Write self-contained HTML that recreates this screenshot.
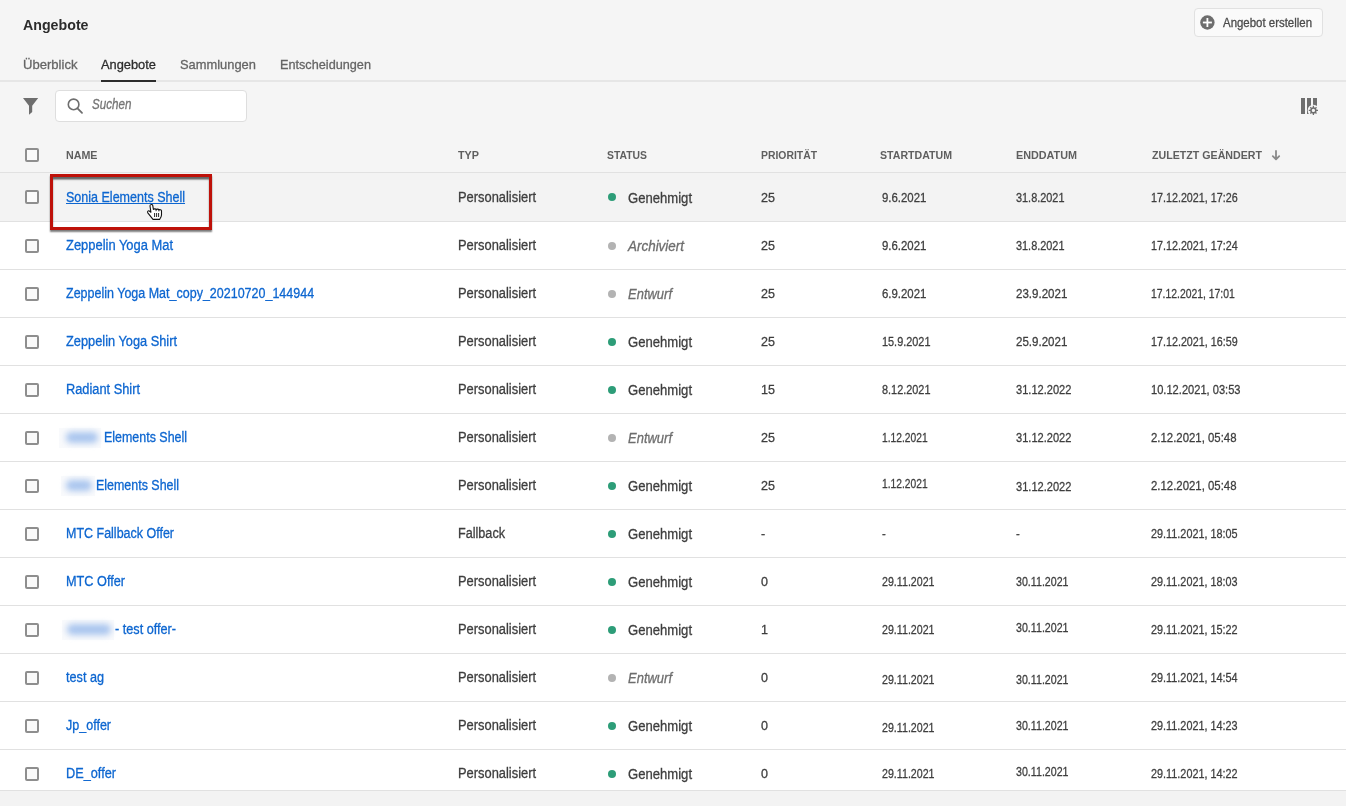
<!DOCTYPE html>
<html><head><meta charset="utf-8"><style>
*{margin:0;padding:0;box-sizing:border-box}
html,body{width:1346px;height:806px;overflow:hidden;background:#f4f4f4;font-family:"Liberation Sans",sans-serif}
.t{position:absolute;white-space:nowrap;transform-origin:0 0;-webkit-text-stroke:0.3px currentColor}
.ic{position:absolute;display:block}
.hdr{position:absolute;left:0;top:0;width:1346px;height:172px;background:#f5f5f5}
.btn{position:absolute;left:1194px;top:8px;width:129px;height:29px;border:1px solid #e1e1e1;border-radius:4px;background:#fafafa}
.tabline{position:absolute;left:0;top:80px;width:1346px;height:2px;background:#e6e6e6}
.tabsel{position:absolute;left:101px;top:80px;width:55px;height:2px;background:#2c2c2c}
.search{position:absolute;left:55px;top:90px;width:192px;height:32px;border:1px solid #dedede;border-radius:4px;background:#fff}
.thead{position:absolute;left:0;top:172px;width:1346px;height:1px;background:#e1e1e1}
.row{position:absolute;left:0;width:1346px;background:#fff}
.ln{position:absolute;left:0;width:1346px;height:1px;background:#e1e1e1}
.row.hov{background:#f3f3f3}
.cb{position:absolute;left:25px;width:14px;height:14px;border:2px solid #8e8e8e;border-radius:2px;background:#fafafa}
.dot{position:absolute;left:608px;width:8px;height:8px;border-radius:50%}
.blur{position:absolute;height:11px;background:#a9c5ee;filter:blur(3px);border-radius:5px}
.blurbox{position:absolute;height:20px;background:#f9fafc}
.foot{position:absolute;left:0;top:790px;width:1346px;height:16px;background:#f3f3f3;border-top:1px solid #e1e1e1}
.hl{position:absolute;left:50px;top:174px;width:162px;height:56px;border:3px solid #be1109;box-shadow:0 2px 1.5px rgba(0,0,0,.5), inset 0 2.5px 1.5px rgba(0,0,0,.6)}
</style></head><body>
<div class="hdr"></div>
<span class="t" style="left:23px;top:16.38px;font-size:15px;line-height:17.25px;font-weight:bold;font-style:normal;color:#2c2c2c;transform:scaleX(0.9473);-webkit-text-stroke:0;">Angebote</span>
<div class="btn"></div>
<svg class="ic" style="left:1200px;top:15px" width="15" height="15" viewBox="0 0 15 15"><circle cx="7.4" cy="7.5" r="7.2" fill="#6e6e6e"/><rect x="6.5" y="3" width="1.8" height="9" fill="#fff"/><rect x="2.9" y="6.6" width="9" height="1.8" fill="#fff"/></svg>
<span class="t" style="left:1223px;top:16.18px;font-size:12.5px;line-height:14.37px;font-weight:normal;font-style:normal;color:#4b4b4b;transform:scaleX(0.9147);">Angebot erstellen</span>
<span class="t" style="left:23px;top:56.56px;font-size:13.5px;line-height:15.52px;font-weight:normal;font-style:normal;color:#656565;transform:scaleX(0.9681);">Überblick</span>
<span class="t" style="left:101px;top:56.56px;font-size:13.5px;line-height:15.52px;font-weight:normal;font-style:normal;color:#2c2c2c;transform:scaleX(0.9508);">Angebote</span>
<span class="t" style="left:180px;top:56.56px;font-size:13.5px;line-height:15.52px;font-weight:normal;font-style:normal;color:#656565;transform:scaleX(0.9548);">Sammlungen</span>
<span class="t" style="left:280px;top:56.56px;font-size:13.5px;line-height:15.52px;font-weight:normal;font-style:normal;color:#656565;transform:scaleX(0.9392);">Entscheidungen</span>
<div class="tabline"></div><div class="tabsel"></div>
<svg class="ic" style="left:23px;top:98px" width="16" height="17" viewBox="0 0 16 17"><path d="M0 0H15.2L9.2 7.8V14.1L6 16.8V7.8Z" fill="#6e6e6e"/></svg>
<div class="search"></div>
<svg class="ic" style="left:66px;top:97px" width="18" height="18" viewBox="0 0 18 18"><circle cx="7.6" cy="7.4" r="5.3" fill="none" stroke="#6e6e6e" stroke-width="1.6"/><path d="M11.5 11.4L16 15.9" stroke="#6e6e6e" stroke-width="1.8" stroke-linecap="round"/></svg>
<span class="t" style="left:92px;top:95.60px;font-size:14px;line-height:16.1px;font-weight:normal;font-style:italic;color:#757575;transform:scaleX(0.8321);">Suchen</span>
<svg class="ic" style="left:1300px;top:97px" width="20" height="20" viewBox="0 0 20 20"><defs><mask id="m1"><rect width="20" height="20" fill="#fff"/><circle cx="13.4" cy="13.4" r="5.7" fill="#000"/></mask></defs><g mask="url(#m1)" fill="#6e6e6e"><rect x="1" y="1" width="4" height="16"/><rect x="7" y="1" width="4" height="16"/><rect x="13" y="1" width="4" height="16"/></g><g transform="translate(13.4 13.4)"><circle r="2.4" fill="none" stroke="#6e6e6e" stroke-width="1.5"/><path d="M0 -4.6V-2.4M0 2.4V4.6M-4.6 0H-2.4M2.4 0H4.6M-3.1 -3.1L-1.8 -1.8M1.8 1.8L3.1 3.1M-3.1 3.1L-1.8 1.8M1.8 -1.8L3.1 -3.1" stroke="#6e6e6e" stroke-width="1.3"/></g></svg>
<div class="thead"></div>
<div class="cb" style="top:148px"></div>
<span class="t" style="left:66px;top:148.86px;font-size:11px;line-height:12.65px;font-weight:bold;font-style:normal;color:#5f5f5f;transform:scaleX(0.9730);-webkit-text-stroke:0;">NAME</span>
<span class="t" style="left:458px;top:148.86px;font-size:11px;line-height:12.65px;font-weight:bold;font-style:normal;color:#5f5f5f;transform:scaleX(0.9810);-webkit-text-stroke:0;">TYP</span>
<span class="t" style="left:607px;top:148.86px;font-size:11px;line-height:12.65px;font-weight:bold;font-style:normal;color:#5f5f5f;transform:scaleX(0.9440);-webkit-text-stroke:0;">STATUS</span>
<span class="t" style="left:761px;top:148.86px;font-size:11px;line-height:12.65px;font-weight:bold;font-style:normal;color:#5f5f5f;transform:scaleX(0.9446);-webkit-text-stroke:0;">PRIORITÄT</span>
<span class="t" style="left:880px;top:148.86px;font-size:11px;line-height:12.65px;font-weight:bold;font-style:normal;color:#5f5f5f;transform:scaleX(0.9636);-webkit-text-stroke:0;">STARTDATUM</span>
<span class="t" style="left:1016px;top:148.86px;font-size:11px;line-height:12.65px;font-weight:bold;font-style:normal;color:#5f5f5f;transform:scaleX(0.9824);-webkit-text-stroke:0;">ENDDATUM</span>
<span class="t" style="left:1152px;top:148.86px;font-size:11px;line-height:12.65px;font-weight:bold;font-style:normal;color:#5f5f5f;transform:scaleX(0.9678);-webkit-text-stroke:0;">ZULETZT GEÄNDERT</span>
<svg class="ic" style="left:1271px;top:149px" width="10" height="12" viewBox="0 0 10 12"><path d="M5 1.9V10.2M1.8 7.1L5 10.3L8.2 7.1" fill="none" stroke="#8a8a8a" stroke-width="1.8" stroke-linecap="round" stroke-linejoin="round"/></svg>
<div class="row hov" style="top:173px;height:48px"></div>
<div class="ln" style="top:221px"></div>
<div class="cb" style="top:190px"></div>
<span class="t" style="left:66px;top:189.10px;font-size:14px;line-height:16.1px;font-weight:normal;font-style:normal;color:#0d66d0;transform:scaleX(0.8944);text-decoration:underline;">Sonia Elements Shell</span>
<span class="t" style="left:458px;top:189.10px;font-size:14px;line-height:16.1px;font-weight:normal;font-style:normal;color:#3e3e3e;transform:scaleX(0.9200);">Personalisiert</span>
<div class="dot" style="top:193px;background:#2d9d78"></div>
<span class="t" style="left:628px;top:189.60px;font-size:14px;line-height:16.1px;font-weight:normal;font-style:normal;color:#3e3e3e;transform:scaleX(0.9349);">Genehmigt</span>
<span class="t" style="left:761px;top:189.84px;font-size:13.2px;line-height:15.18px;font-weight:normal;font-style:normal;color:#3e3e3e;transform:scaleX(0.9500);">25</span>
<span class="t" style="left:881.5px;top:189.84px;font-size:13.2px;line-height:15.18px;font-weight:normal;font-style:normal;color:#3e3e3e;transform:scaleX(0.8648);">9.6.2021</span>
<span class="t" style="left:1016px;top:189.84px;font-size:13.2px;line-height:15.18px;font-weight:normal;font-style:normal;color:#3e3e3e;transform:scaleX(0.8261);">31.8.2021</span>
<span class="t" style="left:1151px;top:189.84px;font-size:13.2px;line-height:15.18px;font-weight:normal;font-style:normal;color:#3e3e3e;transform:scaleX(0.8149);">17.12.2021, 17:26</span>
<div class="row" style="top:222px;height:47px"></div>
<div class="ln" style="top:269px"></div>
<div class="cb" style="top:239px"></div>
<span class="t" style="left:66px;top:237.10px;font-size:14px;line-height:16.1px;font-weight:normal;font-style:normal;color:#0d66d0;transform:scaleX(0.9229);">Zeppelin Yoga Mat</span>
<span class="t" style="left:458px;top:237.10px;font-size:14px;line-height:16.1px;font-weight:normal;font-style:normal;color:#3e3e3e;transform:scaleX(0.9200);">Personalisiert</span>
<div class="dot" style="top:242px;background:#b3b3b3"></div>
<span class="t" style="left:628px;top:238.10px;font-size:14px;line-height:16.1px;font-weight:normal;font-style:italic;color:#6e6e6e;transform:scaleX(0.9601);">Archiviert</span>
<span class="t" style="left:761px;top:237.84px;font-size:13.2px;line-height:15.18px;font-weight:normal;font-style:normal;color:#3e3e3e;transform:scaleX(0.9500);">25</span>
<span class="t" style="left:881.5px;top:237.84px;font-size:13.2px;line-height:15.18px;font-weight:normal;font-style:normal;color:#3e3e3e;transform:scaleX(0.8648);">9.6.2021</span>
<span class="t" style="left:1016px;top:237.84px;font-size:13.2px;line-height:15.18px;font-weight:normal;font-style:normal;color:#3e3e3e;transform:scaleX(0.8261);">31.8.2021</span>
<span class="t" style="left:1151px;top:237.84px;font-size:13.2px;line-height:15.18px;font-weight:normal;font-style:normal;color:#3e3e3e;transform:scaleX(0.8149);">17.12.2021, 17:24</span>
<div class="row" style="top:270px;height:47px"></div>
<div class="ln" style="top:317px"></div>
<div class="cb" style="top:287px"></div>
<span class="t" style="left:66px;top:285.10px;font-size:14px;line-height:16.1px;font-weight:normal;font-style:normal;color:#0d66d0;transform:scaleX(0.8928);">Zeppelin Yoga Mat_copy_20210720_144944</span>
<span class="t" style="left:458px;top:285.10px;font-size:14px;line-height:16.1px;font-weight:normal;font-style:normal;color:#3e3e3e;transform:scaleX(0.9200);">Personalisiert</span>
<div class="dot" style="top:290px;background:#b3b3b3"></div>
<span class="t" style="left:628px;top:286.10px;font-size:14px;line-height:16.1px;font-weight:normal;font-style:italic;color:#6e6e6e;transform:scaleX(0.9272);">Entwurf</span>
<span class="t" style="left:761px;top:285.84px;font-size:13.2px;line-height:15.18px;font-weight:normal;font-style:normal;color:#3e3e3e;transform:scaleX(0.9500);">25</span>
<span class="t" style="left:881.5px;top:285.84px;font-size:13.2px;line-height:15.18px;font-weight:normal;font-style:normal;color:#3e3e3e;transform:scaleX(0.8648);">6.9.2021</span>
<span class="t" style="left:1016px;top:285.84px;font-size:13.2px;line-height:15.18px;font-weight:normal;font-style:normal;color:#3e3e3e;transform:scaleX(0.8755);">23.9.2021</span>
<span class="t" style="left:1151px;top:285.84px;font-size:13.2px;line-height:15.18px;font-weight:normal;font-style:normal;color:#3e3e3e;transform:scaleX(0.7877);">17.12.2021, 17:01</span>
<div class="row" style="top:318px;height:47px"></div>
<div class="ln" style="top:365px"></div>
<div class="cb" style="top:335px"></div>
<span class="t" style="left:66px;top:333.10px;font-size:14px;line-height:16.1px;font-weight:normal;font-style:normal;color:#0d66d0;transform:scaleX(0.9144);">Zeppelin Yoga Shirt</span>
<span class="t" style="left:458px;top:333.10px;font-size:14px;line-height:16.1px;font-weight:normal;font-style:normal;color:#3e3e3e;transform:scaleX(0.9200);">Personalisiert</span>
<div class="dot" style="top:338px;background:#2d9d78"></div>
<span class="t" style="left:628px;top:333.60px;font-size:14px;line-height:16.1px;font-weight:normal;font-style:normal;color:#3e3e3e;transform:scaleX(0.9349);">Genehmigt</span>
<span class="t" style="left:761px;top:333.84px;font-size:13.2px;line-height:15.18px;font-weight:normal;font-style:normal;color:#3e3e3e;transform:scaleX(0.9500);">25</span>
<span class="t" style="left:881.5px;top:333.84px;font-size:13.2px;line-height:15.18px;font-weight:normal;font-style:normal;color:#3e3e3e;transform:scaleX(0.8261);">15.9.2021</span>
<span class="t" style="left:1016px;top:333.84px;font-size:13.2px;line-height:15.18px;font-weight:normal;font-style:normal;color:#3e3e3e;transform:scaleX(0.8755);">25.9.2021</span>
<span class="t" style="left:1151px;top:333.84px;font-size:13.2px;line-height:15.18px;font-weight:normal;font-style:normal;color:#3e3e3e;transform:scaleX(0.8149);">17.12.2021, 16:59</span>
<div class="row" style="top:366px;height:47px"></div>
<div class="ln" style="top:413px"></div>
<div class="cb" style="top:383px"></div>
<span class="t" style="left:66px;top:381.10px;font-size:14px;line-height:16.1px;font-weight:normal;font-style:normal;color:#0d66d0;transform:scaleX(0.9146);">Radiant Shirt</span>
<span class="t" style="left:458px;top:381.10px;font-size:14px;line-height:16.1px;font-weight:normal;font-style:normal;color:#3e3e3e;transform:scaleX(0.9200);">Personalisiert</span>
<div class="dot" style="top:386px;background:#2d9d78"></div>
<span class="t" style="left:628px;top:381.60px;font-size:14px;line-height:16.1px;font-weight:normal;font-style:normal;color:#3e3e3e;transform:scaleX(0.9349);">Genehmigt</span>
<span class="t" style="left:761px;top:381.84px;font-size:13.2px;line-height:15.18px;font-weight:normal;font-style:normal;color:#3e3e3e;transform:scaleX(0.9500);">15</span>
<span class="t" style="left:881.5px;top:381.84px;font-size:13.2px;line-height:15.18px;font-weight:normal;font-style:normal;color:#3e3e3e;transform:scaleX(0.8261);">8.12.2021</span>
<span class="t" style="left:1016px;top:381.84px;font-size:13.2px;line-height:15.18px;font-weight:normal;font-style:normal;color:#3e3e3e;transform:scaleX(0.8399);">31.12.2022</span>
<span class="t" style="left:1151px;top:381.84px;font-size:13.2px;line-height:15.18px;font-weight:normal;font-style:normal;color:#3e3e3e;transform:scaleX(0.8421);">10.12.2021, 03:53</span>
<div class="row" style="top:414px;height:47px"></div>
<div class="ln" style="top:461px"></div>
<div class="cb" style="top:431px"></div>
<div class="blurbox" style="left:59px;top:428px;width:42px"></div><div class="blur" style="left:66px;top:432px;width:32px"></div>
<span class="t" style="left:104px;top:429.10px;font-size:14px;line-height:16.1px;font-weight:normal;font-style:normal;color:#0d66d0;transform:scaleX(0.8890);">Elements Shell</span>
<span class="t" style="left:458px;top:429.10px;font-size:14px;line-height:16.1px;font-weight:normal;font-style:normal;color:#3e3e3e;transform:scaleX(0.9200);">Personalisiert</span>
<div class="dot" style="top:434px;background:#b3b3b3"></div>
<span class="t" style="left:628px;top:430.10px;font-size:14px;line-height:16.1px;font-weight:normal;font-style:italic;color:#6e6e6e;transform:scaleX(0.9272);">Entwurf</span>
<span class="t" style="left:761px;top:429.84px;font-size:13.2px;line-height:15.18px;font-weight:normal;font-style:normal;color:#3e3e3e;transform:scaleX(0.9500);">25</span>
<span class="t" style="left:881.5px;top:429.84px;font-size:13.2px;line-height:15.18px;font-weight:normal;font-style:normal;color:#3e3e3e;transform:scaleX(0.7768);">1.12.2021</span>
<span class="t" style="left:1016px;top:429.84px;font-size:13.2px;line-height:15.18px;font-weight:normal;font-style:normal;color:#3e3e3e;transform:scaleX(0.8399);">31.12.2022</span>
<span class="t" style="left:1151px;top:429.84px;font-size:13.2px;line-height:15.18px;font-weight:normal;font-style:normal;color:#3e3e3e;transform:scaleX(0.8634);">2.12.2021, 05:48</span>
<div class="row" style="top:462px;height:47px"></div>
<div class="ln" style="top:509px"></div>
<div class="cb" style="top:479px"></div>
<div class="blurbox" style="left:61px;top:476px;width:34px"></div><div class="blur" style="left:66px;top:480px;width:26px"></div>
<span class="t" style="left:96px;top:477.10px;font-size:14px;line-height:16.1px;font-weight:normal;font-style:normal;color:#0d66d0;transform:scaleX(0.8890);">Elements Shell</span>
<span class="t" style="left:458px;top:477.10px;font-size:14px;line-height:16.1px;font-weight:normal;font-style:normal;color:#3e3e3e;transform:scaleX(0.9200);">Personalisiert</span>
<div class="dot" style="top:482px;background:#2d9d78"></div>
<span class="t" style="left:628px;top:477.60px;font-size:14px;line-height:16.1px;font-weight:normal;font-style:normal;color:#3e3e3e;transform:scaleX(0.9349);">Genehmigt</span>
<span class="t" style="left:761px;top:477.84px;font-size:13.2px;line-height:15.18px;font-weight:normal;font-style:normal;color:#3e3e3e;transform:scaleX(0.9500);">25</span>
<span class="t" style="left:881.5px;top:475.84px;font-size:13.2px;line-height:15.18px;font-weight:normal;font-style:normal;color:#3e3e3e;transform:scaleX(0.7768);">1.12.2021</span>
<span class="t" style="left:1016px;top:478.84px;font-size:13.2px;line-height:15.18px;font-weight:normal;font-style:normal;color:#3e3e3e;transform:scaleX(0.8399);">31.12.2022</span>
<span class="t" style="left:1151px;top:477.84px;font-size:13.2px;line-height:15.18px;font-weight:normal;font-style:normal;color:#3e3e3e;transform:scaleX(0.8634);">2.12.2021, 05:48</span>
<div class="row" style="top:510px;height:47px"></div>
<div class="ln" style="top:557px"></div>
<div class="cb" style="top:527px"></div>
<span class="t" style="left:66px;top:525.10px;font-size:14px;line-height:16.1px;font-weight:normal;font-style:normal;color:#0d66d0;transform:scaleX(0.8921);">MTC Fallback Offer</span>
<span class="t" style="left:458px;top:525.10px;font-size:14px;line-height:16.1px;font-weight:normal;font-style:normal;color:#3e3e3e;transform:scaleX(0.9019);">Fallback</span>
<div class="dot" style="top:530px;background:#2d9d78"></div>
<span class="t" style="left:628px;top:525.60px;font-size:14px;line-height:16.1px;font-weight:normal;font-style:normal;color:#3e3e3e;transform:scaleX(0.9349);">Genehmigt</span>
<span class="t" style="left:761px;top:525.84px;font-size:13.2px;line-height:15.18px;font-weight:normal;font-style:normal;color:#3e3e3e;transform:scaleX(0.9500);">-</span>
<span class="t" style="left:881.5px;top:525.84px;font-size:13.2px;line-height:15.18px;font-weight:normal;font-style:normal;color:#3e3e3e;transform:scaleX(0.8600);">-</span>
<span class="t" style="left:1016px;top:525.84px;font-size:13.2px;line-height:15.18px;font-weight:normal;font-style:normal;color:#3e3e3e;transform:scaleX(0.8600);">-</span>
<span class="t" style="left:1151px;top:525.84px;font-size:13.2px;line-height:15.18px;font-weight:normal;font-style:normal;color:#3e3e3e;transform:scaleX(0.8225);">29.11.2021, 18:05</span>
<div class="row" style="top:558px;height:47px"></div>
<div class="ln" style="top:605px"></div>
<div class="cb" style="top:575px"></div>
<span class="t" style="left:66px;top:573.10px;font-size:14px;line-height:16.1px;font-weight:normal;font-style:normal;color:#0d66d0;transform:scaleX(0.9068);">MTC Offer</span>
<span class="t" style="left:458px;top:573.10px;font-size:14px;line-height:16.1px;font-weight:normal;font-style:normal;color:#3e3e3e;transform:scaleX(0.9200);">Personalisiert</span>
<div class="dot" style="top:578px;background:#2d9d78"></div>
<span class="t" style="left:628px;top:573.60px;font-size:14px;line-height:16.1px;font-weight:normal;font-style:normal;color:#3e3e3e;transform:scaleX(0.9349);">Genehmigt</span>
<span class="t" style="left:761px;top:573.84px;font-size:13.2px;line-height:15.18px;font-weight:normal;font-style:normal;color:#3e3e3e;transform:scaleX(0.9500);">0</span>
<span class="t" style="left:881.5px;top:573.84px;font-size:13.2px;line-height:15.18px;font-weight:normal;font-style:normal;color:#3e3e3e;transform:scaleX(0.8081);">29.11.2021</span>
<span class="t" style="left:1016px;top:573.84px;font-size:13.2px;line-height:15.18px;font-weight:normal;font-style:normal;color:#3e3e3e;transform:scaleX(0.8081);">30.11.2021</span>
<span class="t" style="left:1151px;top:573.84px;font-size:13.2px;line-height:15.18px;font-weight:normal;font-style:normal;color:#3e3e3e;transform:scaleX(0.8225);">29.11.2021, 18:03</span>
<div class="row" style="top:606px;height:47px"></div>
<div class="ln" style="top:653px"></div>
<div class="cb" style="top:623px"></div>
<div class="blurbox" style="left:62px;top:620px;width:52px"></div><div class="blur" style="left:67px;top:624px;width:44px"></div>
<span class="t" style="left:115px;top:621.10px;font-size:14px;line-height:16.1px;font-weight:normal;font-style:normal;color:#0d66d0;transform:scaleX(0.9050);">- test offer-</span>
<span class="t" style="left:458px;top:621.10px;font-size:14px;line-height:16.1px;font-weight:normal;font-style:normal;color:#3e3e3e;transform:scaleX(0.9200);">Personalisiert</span>
<div class="dot" style="top:626px;background:#2d9d78"></div>
<span class="t" style="left:628px;top:621.60px;font-size:14px;line-height:16.1px;font-weight:normal;font-style:normal;color:#3e3e3e;transform:scaleX(0.9349);">Genehmigt</span>
<span class="t" style="left:761px;top:621.84px;font-size:13.2px;line-height:15.18px;font-weight:normal;font-style:normal;color:#3e3e3e;transform:scaleX(0.9500);">1</span>
<span class="t" style="left:881.5px;top:621.84px;font-size:13.2px;line-height:15.18px;font-weight:normal;font-style:normal;color:#3e3e3e;transform:scaleX(0.8081);">29.11.2021</span>
<span class="t" style="left:1016px;top:619.84px;font-size:13.2px;line-height:15.18px;font-weight:normal;font-style:normal;color:#3e3e3e;transform:scaleX(0.8081);">30.11.2021</span>
<span class="t" style="left:1151px;top:621.84px;font-size:13.2px;line-height:15.18px;font-weight:normal;font-style:normal;color:#3e3e3e;transform:scaleX(0.8225);">29.11.2021, 15:22</span>
<div class="row" style="top:654px;height:47px"></div>
<div class="ln" style="top:701px"></div>
<div class="cb" style="top:671px"></div>
<span class="t" style="left:66px;top:669.10px;font-size:14px;line-height:16.1px;font-weight:normal;font-style:normal;color:#0d66d0;transform:scaleX(0.9044);">test ag</span>
<span class="t" style="left:458px;top:669.10px;font-size:14px;line-height:16.1px;font-weight:normal;font-style:normal;color:#3e3e3e;transform:scaleX(0.9200);">Personalisiert</span>
<div class="dot" style="top:674px;background:#b3b3b3"></div>
<span class="t" style="left:628px;top:670.10px;font-size:14px;line-height:16.1px;font-weight:normal;font-style:italic;color:#6e6e6e;transform:scaleX(0.9272);">Entwurf</span>
<span class="t" style="left:761px;top:669.84px;font-size:13.2px;line-height:15.18px;font-weight:normal;font-style:normal;color:#3e3e3e;transform:scaleX(0.9500);">0</span>
<span class="t" style="left:881.5px;top:671.84px;font-size:13.2px;line-height:15.18px;font-weight:normal;font-style:normal;color:#3e3e3e;transform:scaleX(0.8081);">29.11.2021</span>
<span class="t" style="left:1016px;top:671.84px;font-size:13.2px;line-height:15.18px;font-weight:normal;font-style:normal;color:#3e3e3e;transform:scaleX(0.8081);">30.11.2021</span>
<span class="t" style="left:1151px;top:669.84px;font-size:13.2px;line-height:15.18px;font-weight:normal;font-style:normal;color:#3e3e3e;transform:scaleX(0.8225);">29.11.2021, 14:54</span>
<div class="row" style="top:702px;height:47px"></div>
<div class="ln" style="top:749px"></div>
<div class="cb" style="top:719px"></div>
<span class="t" style="left:66px;top:717.10px;font-size:14px;line-height:16.1px;font-weight:normal;font-style:normal;color:#0d66d0;transform:scaleX(0.8944);">Jp_offer</span>
<span class="t" style="left:458px;top:717.10px;font-size:14px;line-height:16.1px;font-weight:normal;font-style:normal;color:#3e3e3e;transform:scaleX(0.9200);">Personalisiert</span>
<div class="dot" style="top:722px;background:#2d9d78"></div>
<span class="t" style="left:628px;top:717.60px;font-size:14px;line-height:16.1px;font-weight:normal;font-style:normal;color:#3e3e3e;transform:scaleX(0.9349);">Genehmigt</span>
<span class="t" style="left:761px;top:717.84px;font-size:13.2px;line-height:15.18px;font-weight:normal;font-style:normal;color:#3e3e3e;transform:scaleX(0.9500);">0</span>
<span class="t" style="left:881.5px;top:719.84px;font-size:13.2px;line-height:15.18px;font-weight:normal;font-style:normal;color:#3e3e3e;transform:scaleX(0.8081);">29.11.2021</span>
<span class="t" style="left:1016px;top:717.84px;font-size:13.2px;line-height:15.18px;font-weight:normal;font-style:normal;color:#3e3e3e;transform:scaleX(0.8081);">30.11.2021</span>
<span class="t" style="left:1151px;top:717.84px;font-size:13.2px;line-height:15.18px;font-weight:normal;font-style:normal;color:#3e3e3e;transform:scaleX(0.8225);">29.11.2021, 14:23</span>
<div class="row" style="top:750px;height:47px"></div>
<div class="ln" style="top:797px"></div>
<div class="cb" style="top:767px"></div>
<span class="t" style="left:66px;top:765.10px;font-size:14px;line-height:16.1px;font-weight:normal;font-style:normal;color:#0d66d0;transform:scaleX(0.9093);">DE_offer</span>
<span class="t" style="left:458px;top:765.10px;font-size:14px;line-height:16.1px;font-weight:normal;font-style:normal;color:#3e3e3e;transform:scaleX(0.9200);">Personalisiert</span>
<div class="dot" style="top:770px;background:#2d9d78"></div>
<span class="t" style="left:628px;top:765.60px;font-size:14px;line-height:16.1px;font-weight:normal;font-style:normal;color:#3e3e3e;transform:scaleX(0.9349);">Genehmigt</span>
<span class="t" style="left:761px;top:765.84px;font-size:13.2px;line-height:15.18px;font-weight:normal;font-style:normal;color:#3e3e3e;transform:scaleX(0.9500);">0</span>
<span class="t" style="left:881.5px;top:765.84px;font-size:13.2px;line-height:15.18px;font-weight:normal;font-style:normal;color:#3e3e3e;transform:scaleX(0.8081);">29.11.2021</span>
<span class="t" style="left:1016px;top:763.84px;font-size:13.2px;line-height:15.18px;font-weight:normal;font-style:normal;color:#3e3e3e;transform:scaleX(0.8081);">30.11.2021</span>
<span class="t" style="left:1151px;top:766.34px;font-size:13.2px;line-height:15.18px;font-weight:normal;font-style:normal;color:#3e3e3e;transform:scaleX(0.8225);">29.11.2021, 14:22</span>
<div class="hl"></div>
<svg class="ic" style="left:142px;top:200px" width="24" height="24" viewBox="0 0 24 24"><path d="M9.2 4.5C10.1 4.3 10.7 4.9 10.8 5.8L11.4 9.4C11.9 8.7 13.7 8.7 14.1 9.5C14.7 8.9 16.5 9 16.9 9.9C17.6 9.4 19.4 9.7 19.5 10.9L19.5 15C19.5 16.5 18.5 18 17.6 19.4L11 19.4L5.8 12.8C5.1 11.8 6.1 10.3 7.3 11L8.9 12.2L8 6C7.9 5.2 8.4 4.6 9.2 4.5Z" fill="#fff" stroke="#111" stroke-width="1.1" stroke-linejoin="round"/><path d="M12.6 13V17M14.6 13V17M16.6 13V17M14.1 9.5V11.2M16.9 9.9V11.4" stroke="#111" stroke-width="0.9"/></svg>
<div class="foot"></div>
</body></html>
